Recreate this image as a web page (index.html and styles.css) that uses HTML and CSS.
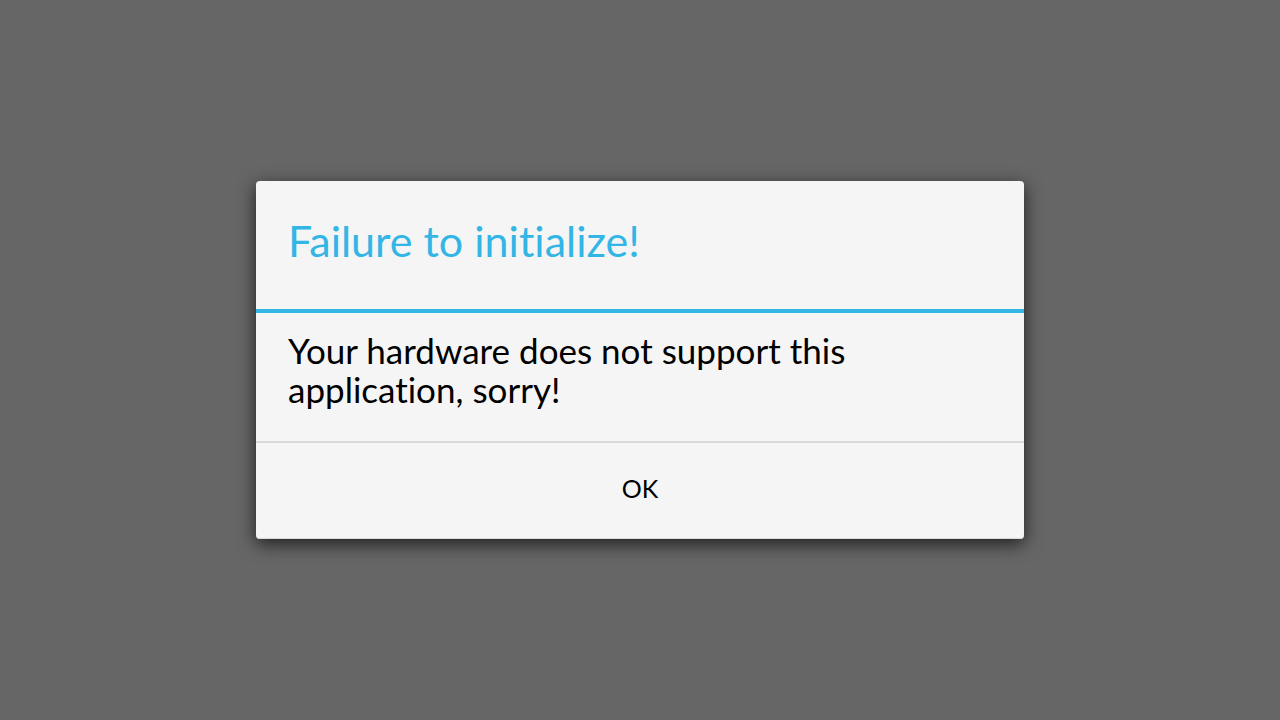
FILE: index.html
```html
<!DOCTYPE html>
<html lang="en">
<head>
<meta charset="utf-8">
<meta name="viewport" content="width=device-width, initial-scale=1">
<title>Failure to initialize!</title>
<link rel="stylesheet" href="styles.css">
</head>
<body class="screen">
<main class="dialog" role="alertdialog" aria-labelledby="title" aria-describedby="message">
<h1 class="dialog-title" id="title">Failure to initialize!</h1>
<p class="dialog-message" id="message">Your hardware does not support this application, sorry!</p>
<button class="dialog-button" type="button">OK</button>
</main>
</body>
</html>
```

FILE: styles.css
```css
* {
  box-sizing: border-box;
}

.screen {
  display: flex;
  align-items: center;
  justify-content: center;
  min-height: 100vh;
  margin: 0;
  background: #666;
  font-family: Lato, sans-serif;
  font-variant-ligatures: none;
}

.dialog {
  display: flex;
  flex-direction: column;
  width: 60%;
  overflow: hidden;
  border-radius: 4px;
  background: #f5f5f5;
  color: #000;
  box-shadow: 0 5px 18px rgba(0, 0, 0, 0.7), inset 0 -1px 0 #d9d9d9;
}

.dialog-title {
  margin: 0;
  padding: 28px 32px 36px;
  border-bottom: 4px solid #33b5e5;
  color: #33b5e5;
  font-size: 43px;
  font-weight: 400;
  line-height: 64px;
}

.dialog-message {
  margin: 0;
  padding: 18px 32px 32px;
  font-size: 35px;
  line-height: 39px;
}

.dialog-button {
  height: 98px;
  padding: 0 32px 6px;
  border: 0;
  border-top: 2px solid #d9d9d9;
  background: transparent;
  color: inherit;
  font-family: inherit;
  font-size: 25px;
}
```
